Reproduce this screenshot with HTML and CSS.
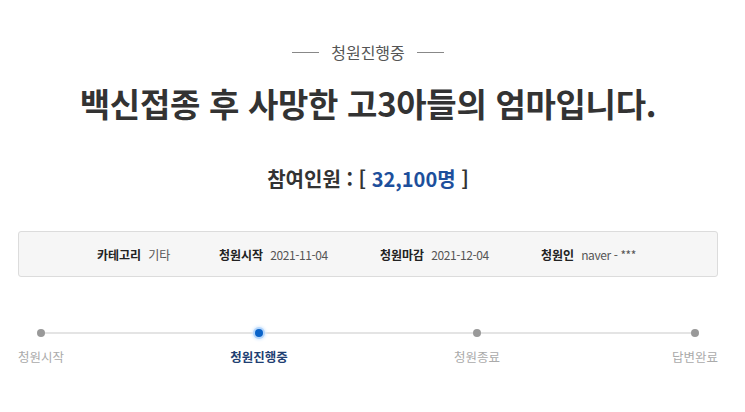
FILE: index.html
```html
<!DOCTYPE html>
<html lang="ko">
<head>
<meta charset="utf-8">
<link rel="stylesheet" href="styles.css">
</head>
<body>
<div class="page">
  <div class="status"><span class="dash"></span><span class="status-text">청원진행중</span><span class="dash"></span></div>
  <h1 class="title">백신접종 후 사망한 고3아들의 엄마입니다.</h1>
  <div class="count">참여인원 : [ <span class="num">32,100명</span> ]</div>
  <div class="info">
    <div class="item"><b>카테고리</b><span>기타</span></div>
    <div class="item"><b>청원시작</b><span class="narrow">2021-11-04</span></div>
    <div class="item"><b>청원마감</b><span class="narrow">2021-12-04</span></div>
    <div class="item"><b>청원인</b><span class="narrow">naver - ***</span></div>
  </div>
  <div class="progress">
    <div class="line"></div>
    <div class="step"><span class="dot"></span><span class="label">청원시작</span></div>
    <div class="step active"><span class="dot"></span><span class="label">청원진행중</span></div>
    <div class="step"><span class="dot"></span><span class="label">청원종료</span></div>
    <div class="step"><span class="dot"></span><span class="label">답변완료</span></div>
  </div>
</div>
</body>
</html>
```

FILE: styles.css
```css
html, body { margin: 0; padding: 0; background: #fff; }
body { font-family: "Noto Sans CJK KR", "Noto Sans", sans-serif; color: #333; }
.page { padding: 0 27px 0 18px; }
.status { display: flex; justify-content: center; align-items: center; gap: 12px; padding-top: 40px; height: 24px; }
.dash { width: 27px; height: 1px; background: #888; }
.status-text { font-size: 16px; color: #555; line-height: 24px; }
.title { margin: 18px 0 0; text-align: center; font-size: 33px; font-weight: 700; line-height: 42px; color: #333; letter-spacing: -0.3px; }
.count { margin-top: 41px; text-align: center; font-size: 20px; font-weight: 700; line-height: 28px; color: #333; }
.num { color: #1d4f9c; }
.info { margin-top: 38px; height: 46px; box-sizing: border-box; border: 1px solid #dcdcdc; border-radius: 3px; background: #f6f6f6; display: flex; align-items: center; padding-left: 78px; font-size: 12px; color: #333; }
.item { display: flex; align-items: center; gap: 7px; }
.item b { font-weight: 700; color: #222; }
.item span { color: #555; }
.item:nth-child(1) { width: 122px; }
.item:nth-child(2) { width: 161px; }
.item:nth-child(3) { width: 161px; }
.narrow { letter-spacing: -0.4px; }
.progress { position: relative; display: flex; justify-content: space-between; margin-top: 52px; }
.line { position: absolute; left: 23px; right: 23px; top: 3px; height: 2px; background: #e4e4e4; }
.step { position: relative; width: 46px; display: flex; flex-direction: column; align-items: center; }
.dot { width: 8px; height: 8px; border-radius: 50%; background: #999; }
.step.active .dot { background: #0a63c9; box-shadow: 0 0 0 2px #b5d6fb, 0 0 3px 3px #dcecfd; }
.label { margin-top: 11px; font-size: 12.5px; color: #aaa; white-space: nowrap; line-height: 18px; }
.step.active .label { color: #1f3f73; font-weight: 700; }
```
